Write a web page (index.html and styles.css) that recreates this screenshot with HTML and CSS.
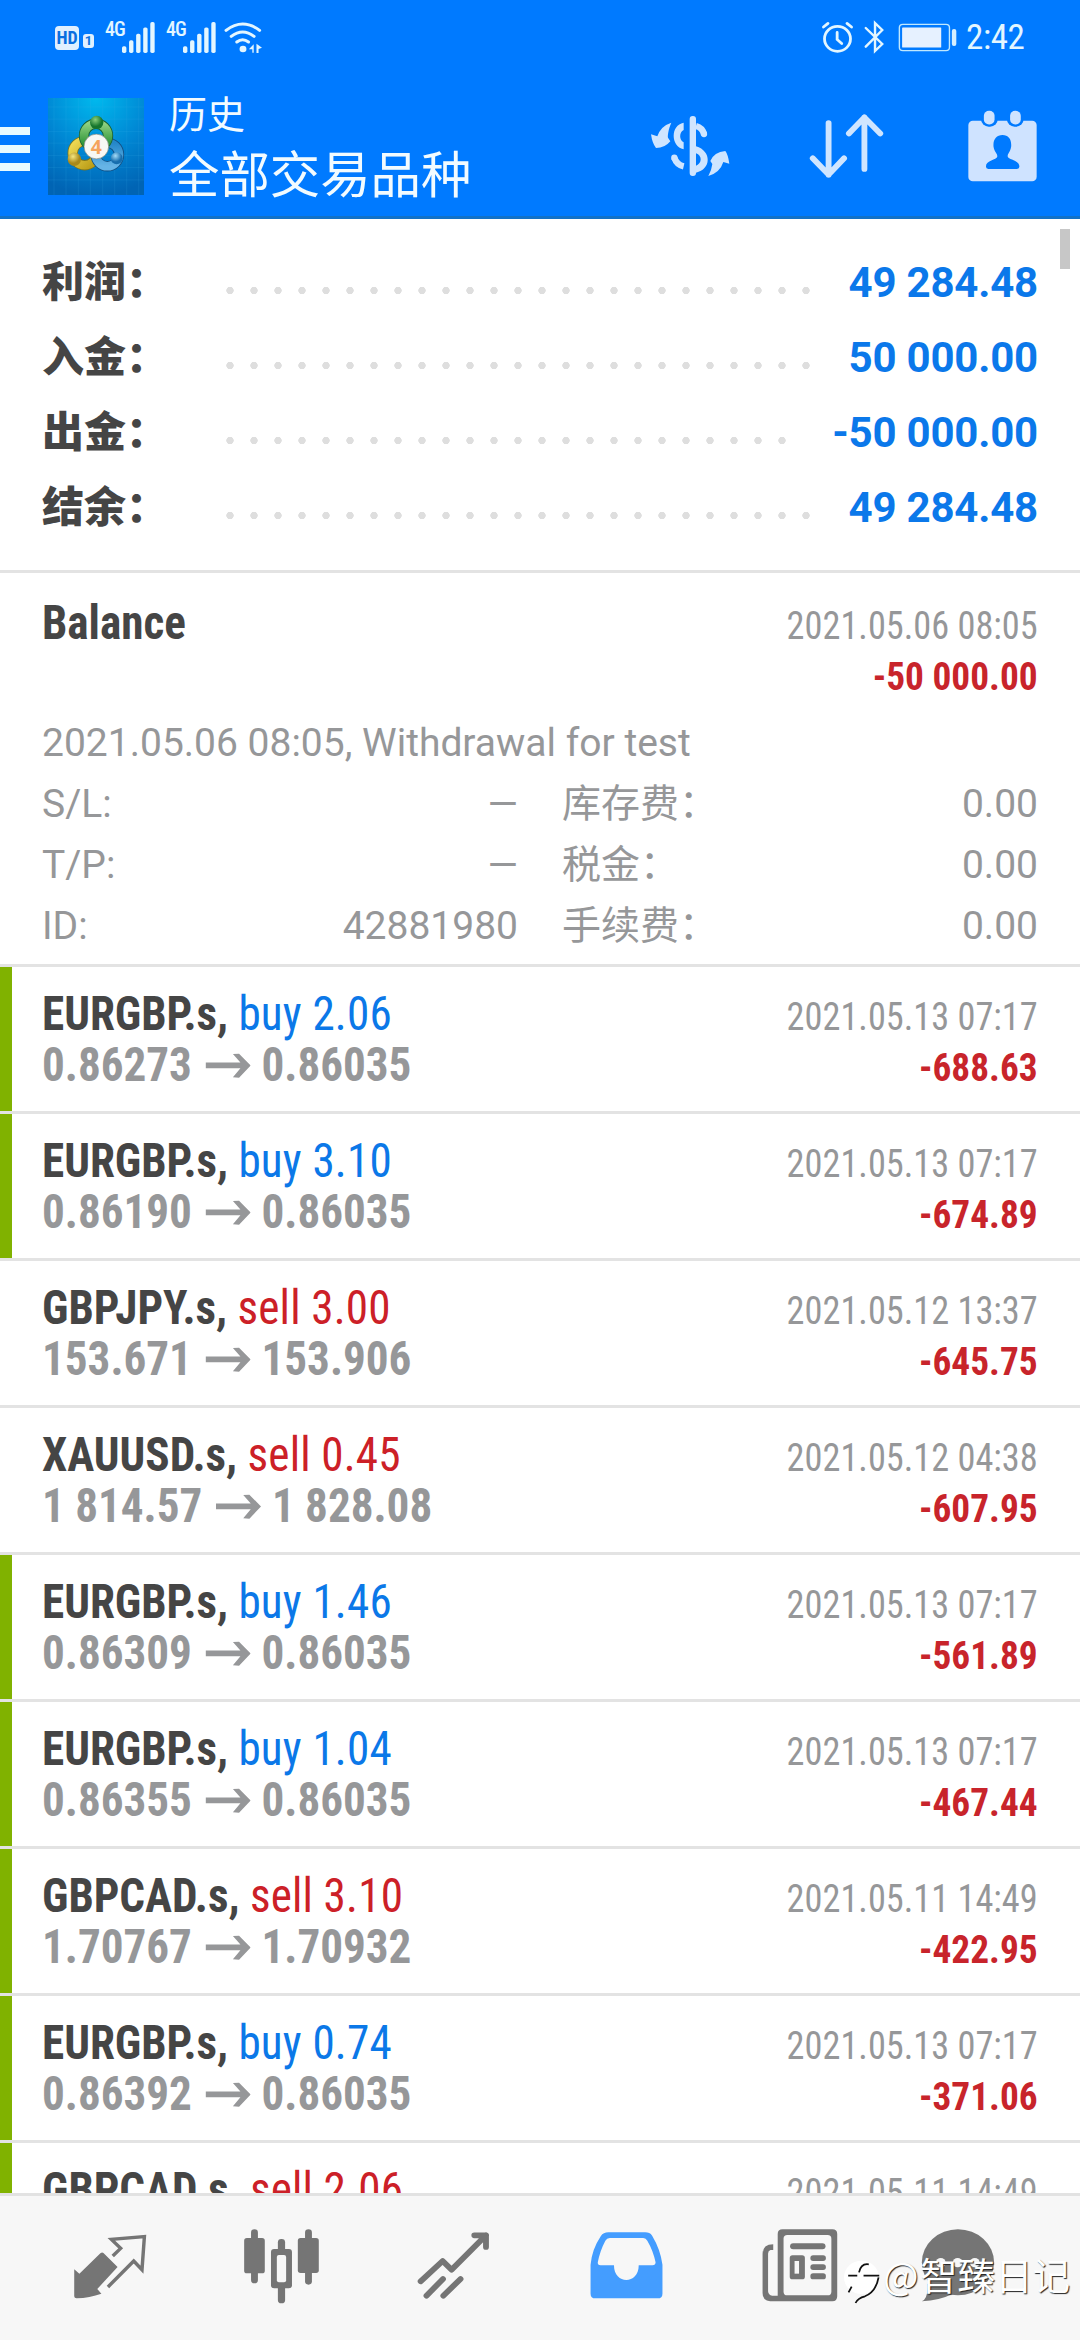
FILE: index.html
```html
<!DOCTYPE html>
<html lang="zh-CN">
<head>
<meta charset="utf-8">
<title>历史</title>
<link rel="stylesheet" href="styles.css">
</head>
<body>
<svg class="defs" width="0" height="0">
  <symbol id="arrow" viewBox="0 0 132 74" preserveAspectRatio="none"><path d="M0 28H102L80 3L98 2L132 37L98 73L80 72L102 45H0Z" fill="#969799"/></symbol>
  <symbol id="bars" viewBox="0 0 98 92" preserveAspectRatio="none"><g fill="#e3f6ff"><rect x="0" y="72" width="13" height="20" rx="5"/><rect x="21" y="54" width="13" height="38" rx="5"/><rect x="42" y="35" width="13" height="57" rx="5"/><rect x="63" y="16" width="13" height="76" rx="5"/><rect x="84" y="0" width="13" height="92" rx="5"/></g></symbol>
</svg>

<header class="top">
  <div class="status">
    <span class="hd">HD</span><span class="sim">1</span>
    <span class="net">4G</span><svg class="signal"><use href="#bars"/></svg>
    <span class="net second">4G</span><svg class="signal"><use href="#bars"/></svg>
    <svg class="wifi" viewBox="650 62 110 96" preserveAspectRatio="none">
      <g fill="none" stroke="#e3f6ff" stroke-width="9" stroke-linecap="round"><path d="M656 90Q704 52 753 90"/><path d="M671 108Q704 82 737 108"/><path d="M687 125Q704 112 721 125"/></g>
      <circle cx="705" cy="146" r="10" fill="#e3f6ff"/><path d="M722 147L736 132V157H732V147ZM744 130L760 142L750 146V158H744Z" fill="#e3f6ff"/>
    </svg>
    <svg class="alarm" viewBox="816 62 94 98" preserveAspectRatio="none">
      <g fill="none" stroke="#e3f6ff" stroke-width="8" stroke-linecap="round"><circle cx="863" cy="115" r="37"/><path d="M862 96V117L875 129"/><path d="M823 80L836 69M903 80L890 69"/></g>
    </svg>
    <svg class="bt" viewBox="936 60 64 102" preserveAspectRatio="none"><path d="M944 84L992 132L971 153V69L992 90L944 140" fill="none" stroke="#e3f6ff" stroke-width="7" stroke-linecap="round"/></svg>
    <svg class="battery" viewBox="1038 70 172 86" preserveAspectRatio="none"><rect x="1042" y="74" width="146" height="78" rx="10" fill="none" stroke="#bfe8ff" stroke-width="4"/><rect x="1050" y="83" width="114" height="60" rx="2" fill="#e6f1ff"/><rect x="1195" y="88" width="13" height="50" rx="6" fill="#d5efff"/></svg>
    <span class="clock">2:42</span>
  </div>
  <div class="appbar">
    <svg class="menu" viewBox="0 0 30 52"><path d="M0 7H30V15H0ZM0 25H30V33H0ZM0 43H30V51H0Z" fill="#e8fbff"/></svg>
    <svg class="logo" viewBox="24 25 288 290" preserveAspectRatio="none">
      <defs>
        <radialGradient id="sky" cx=".5" cy="0" r="1"><stop offset="0" stop-color="#00b9ee"/><stop offset=".55" stop-color="#0086d3"/><stop offset="1" stop-color="#0064b4"/></radialGradient>
        <linearGradient id="green" x2="0" y2="1"><stop stop-color="#8ed07f"/><stop offset="1" stop-color="#1d8a2c"/></linearGradient>
        <linearGradient id="gold" x2="1" y2="1"><stop stop-color="#efdb55"/><stop offset="1" stop-color="#b99a14"/></linearGradient>
        <linearGradient id="azure" x2="0" y2="1"><stop stop-color="#2487c9"/><stop offset="1" stop-color="#66b4e6"/></linearGradient>
        <radialGradient id="gball" cx=".4" cy=".3"><stop stop-color="#8bd07c"/><stop offset="1" stop-color="#16752c"/></radialGradient>
        <radialGradient id="yball" cx=".4" cy=".3"><stop stop-color="#f4e680"/><stop offset="1" stop-color="#a8891a"/></radialGradient>
        <radialGradient id="bball" cx=".4" cy=".3"><stop stop-color="#a5dcf8"/><stop offset="1" stop-color="#176eae"/></radialGradient>
      </defs>
      <rect x="24" y="25" width="288" height="290" fill="url(#sky)"/>
      <path d="M42 25V315M78 25V315M115 25V315M151 25V315M188 25V315M224 25V315M260 25V315M296 25V315M24 52H312M24 88H312M24 125H312M24 160H312M24 197H312M24 233H312M24 270H312" stroke="#3fb4e8" stroke-opacity=".22" stroke-width="2"/>
      <circle cx="134" cy="190" r="36" fill="none" stroke="#7b741d" stroke-width="31"/>
      <circle cx="134" cy="190" r="36" fill="none" stroke="url(#gold)" stroke-width="26"/>
      <circle cx="202" cy="194" r="35" fill="none" stroke="#124f83" stroke-width="31"/>
      <circle cx="202" cy="194" r="35" fill="none" stroke="url(#azure)" stroke-width="26"/>
      <circle cx="168" cy="138" r="36" fill="none" stroke="#195f31" stroke-width="31"/>
      <circle cx="168" cy="138" r="36" fill="none" stroke="url(#green)" stroke-width="26"/>
      <circle cx="170" cy="98" r="20" fill="url(#gball)"/><circle cx="103" cy="208" r="20" fill="url(#yball)"/><circle cx="230" cy="205" r="18" fill="url(#bball)"/>
      <circle cx="169" cy="170" r="37" fill="#f8f8f4" stroke="#76827b" stroke-width="2"/>
      <text x="169" y="192" text-anchor="middle" class="four">4</text>
    </svg>
    <div class="titles"><div class="t1">历史</div><div class="t2">全部交易品种</div></div>
    <svg class="dollar" viewBox="30 42 240 186" preserveAspectRatio="none">
      <g fill="#cfe5ff"><rect x="149" y="45" width="19" height="180" rx="9"/><path d="M131 65C91 72 91 135 131 145V124C117 117 117 94 131 87Z"/><path d="M168 136C216 150 214 206 168 215V194C187 187 187 163 168 157Z"/><path d="M94 65C85 85 83 103 84 110L91 121Q75 141 48 141Q37 128 33 100L52 106Q62 75 94 65Z"/><path d="M205 225Q215 207 217 189L211 180Q222 153 256 150Q264 160 268 188L250 183Q240 215 205 225Z"/></g>
      <path d="M168 75Q187 80 192 99M103 170Q110 191 131 196" fill="none" stroke="#cfe5ff" stroke-width="19"/><circle cx="192" cy="99" r="9.500" fill="#cfe5ff"/><circle cx="103" cy="170" r="9.500" fill="#cfe5ff"/>
    </svg>
    <svg class="sort" viewBox="783 344 212 191" preserveAspectRatio="none"><path d="M837 371V525M791 476L837 525L882 476M941 508V354M896 402L941 354L987 402" fill="none" stroke="#cfe5ff" stroke-width="17" stroke-linecap="round" stroke-linejoin="round"/></svg>
    <svg class="calendar" viewBox="1242 331 200 215" preserveAspectRatio="none"><rect x="1243" y="363" width="198" height="181" rx="13" fill="#cfe3ff"/><rect x="1280" y="326" width="48" height="55" rx="22" fill="#007aff"/><rect x="1355" y="326" width="48" height="55" rx="22" fill="#007aff"/><rect x="1288" y="333" width="31" height="41" rx="15" fill="#cfe3ff"/><rect x="1364" y="333" width="31" height="41" rx="15" fill="#cfe3ff"/><path d="M1342 406C1360 406 1369 420 1367 441C1364 458 1357 460 1357 470C1360 481 1391 480 1391 500Q1391 507 1384 507H1301Q1294 507 1294 500C1294 480 1325 481 1327 470C1327 460 1319 458 1316 441C1314 420 1324 406 1342 406Z" fill="#007aff"/></svg>
  </div>
</header>

<main class="list">
  <div class="thumb"></div>
  <section class="summary">
    <div class="sum"><b>利润：</b><i></i><span>49 284.48</span></div>
    <div class="sum"><b>入金：</b><i></i><span>50 000.00</span></div>
    <div class="sum"><b>出金：</b><i></i><span>-50 000.00</span></div>
    <div class="sum"><b>结余：</b><i></i><span>49 284.48</span></div>
  </section>
  <section class="balance">
    <div class="head"><div class="sym">Balance</div><div class="right"><div class="date">2021.05.06 08:05</div><div class="amt">-50 000.00</div></div></div>
    <div class="note">2021.05.06 08:05, Withdrawal for test</div>
    <div class="grid">
      <div class="kv"><span>S/L:</span><span>—</span></div><div class="kv"><span>库存费：</span><span>0.00</span></div>
      <div class="kv"><span>T/P:</span><span>—</span></div><div class="kv"><span>税金：</span><span>0.00</span></div>
      <div class="kv"><span>ID:</span><span>42881980</span></div><div class="kv"><span>手续费：</span><span>0.00</span></div>
    </div>
  </section>
  <article class="trade green"><div><div class="sym">EURGBP.s, <span class="buy">buy 2.06</span></div><div class="price">0.86273<svg><use href="#arrow"/></svg>0.86035</div></div><div class="right"><div class="date">2021.05.13 07:17</div><div class="amt">-688.63</div></div></article>
  <article class="trade green"><div><div class="sym">EURGBP.s, <span class="buy">buy 3.10</span></div><div class="price">0.86190<svg><use href="#arrow"/></svg>0.86035</div></div><div class="right"><div class="date">2021.05.13 07:17</div><div class="amt">-674.89</div></div></article>
  <article class="trade"><div><div class="sym">GBPJPY.s, <span class="sell">sell 3.00</span></div><div class="price">153.671<svg><use href="#arrow"/></svg>153.906</div></div><div class="right"><div class="date">2021.05.12 13:37</div><div class="amt">-645.75</div></div></article>
  <article class="trade"><div><div class="sym">XAUUSD.s, <span class="sell">sell 0.45</span></div><div class="price">1 814.57<svg><use href="#arrow"/></svg>1 828.08</div></div><div class="right"><div class="date">2021.05.12 04:38</div><div class="amt">-607.95</div></div></article>
  <article class="trade green"><div><div class="sym">EURGBP.s, <span class="buy">buy 1.46</span></div><div class="price">0.86309<svg><use href="#arrow"/></svg>0.86035</div></div><div class="right"><div class="date">2021.05.13 07:17</div><div class="amt">-561.89</div></div></article>
  <article class="trade green"><div><div class="sym">EURGBP.s, <span class="buy">buy 1.04</span></div><div class="price">0.86355<svg><use href="#arrow"/></svg>0.86035</div></div><div class="right"><div class="date">2021.05.13 07:17</div><div class="amt">-467.44</div></div></article>
  <article class="trade green"><div><div class="sym">GBPCAD.s, <span class="sell">sell 3.10</span></div><div class="price">1.70767<svg><use href="#arrow"/></svg>1.70932</div></div><div class="right"><div class="date">2021.05.11 14:49</div><div class="amt">-422.95</div></div></article>
  <article class="trade green"><div><div class="sym">EURGBP.s, <span class="buy">buy 0.74</span></div><div class="price">0.86392<svg><use href="#arrow"/></svg>0.86035</div></div><div class="right"><div class="date">2021.05.13 07:17</div><div class="amt">-371.06</div></div></article>
  <article class="trade green"><div><div class="sym">GBPCAD.s, <span class="sell">sell 2.06</span></div></div><div class="right"><div class="date">2021.05.11 14:49</div></div></article>
</main>

<nav class="tabs">
  <div><svg viewBox="194 380 250 240" preserveAspectRatio="none" fill="#757575"><path d="M300 458L341 500L282 566L294 580Q260 592 222 594Q215 594 215 588V507L230 520L291 459Q296 455 300 458Z"/><path d="M327 467L350 444L323 417L419 409L412 508L388 482L313 560" fill="none" stroke="#757575" stroke-width="10"/></svg></div>
  <div><svg viewBox="694 380 250 240" preserveAspectRatio="none" fill="#757575"><rect x="729" y="387" width="20" height="162" rx="10"/><rect x="709" y="413" width="60" height="106" rx="8"/><rect x="807" y="416" width="21" height="193" rx="10"/><rect x="787" y="446" width="61" height="118" rx="9"/><rect x="804" y="464" width="27" height="82" rx="6" fill="#f7f7f7"/><rect x="886" y="387" width="20" height="166" rx="10"/><rect x="865" y="413" width="61" height="105" rx="8"/></svg></div>
  <div><svg viewBox="1193 380 250 240" preserveAspectRatio="none"><path d="M1221 543L1285 482L1311 508L1411 405M1377 405H1411V440M1238 586L1286 536M1287 586L1337 536" fill="none" stroke="#757575" stroke-width="17" stroke-linecap="round" stroke-linejoin="round"/></svg></div>
  <div><svg viewBox="125 380 250 240" preserveAspectRatio="none"><path d="M199 396H306Q319 396 326 406Q350 447 356 493V580Q356 594 342 594H161Q147 594 147 580V493Q151 447 177 407Q184 396 199 396Z" fill="#449dff"/><path d="M203 413H300Q308 413 312 421Q329 451 336 486Q336 495 327 495H287C287 554 215 554 215 495H176Q167 495 168 486Q174 452 190 421Q194 413 203 413Z" fill="#f7f7f7"/></svg></div>
  <div><svg viewBox="624 380 250 240" preserveAspectRatio="none" fill="#757575"><path d="M704 387H849Q863 387 863 401V588Q863 603 849 603H668Q646 601 646 578V460Q647 432 677 432V449H669Q662 451 662 460V573Q663 585 674 586H690V401Q690 387 704 387Z"/><rect x="707" y="404" width="139" height="181" rx="11" fill="#f7f7f7"/><rect x="726" y="429" width="103" height="18" rx="9"/><rect x="725" y="465" width="44" height="72" rx="8"/><rect x="739" y="482" width="13" height="38" fill="#f7f7f7"/><rect x="785" y="465" width="45" height="17" rx="8"/><rect x="785" y="492" width="45" height="17" rx="8"/><rect x="785" y="519" width="45" height="18" rx="8"/></svg></div>
  <div><svg viewBox="1124 380 250 240" preserveAspectRatio="none" fill="#757575"><ellipse cx="1214" cy="486" rx="105" ry="99"/><path d="M1109 603Q1128 594 1125 550L1200 580Q1160 600 1109 603Z"/><g fill="#f7f7f7"><circle cx="1164" cy="487" r="14"/><circle cx="1213" cy="487" r="14"/><circle cx="1263" cy="487" r="14"/></g></svg></div>
</nav>
<div class="mark">
  <svg viewBox="884 480 106 132" preserveAspectRatio="none"><circle cx="934" cy="532" r="50" fill="#fff"/><path d="M917 609Q924 594 944 589Q976 575 983 532M896 527H922M940 527H985M955 493Q933 489 927 517M906 560L897 577" fill="none" stroke="#111" stroke-width="5"/></svg><span class="at">@</span><span>智臻日记</span>
</div>
</body>
</html>
```
FILE: styles.css
```css
* { box-sizing: border-box; }
body {
  margin: 0; width: 1080px; height: 2340px; overflow: hidden;
  display: flex; flex-direction: column; position: relative;
  background: #fff; color: #454545;
  font-family: Roboto, "Noto Sans CJK SC", sans-serif;
}
svg { display: block; flex: none; overflow: visible; }
.defs { position: absolute; }

.top { height: 219px; background: #007aff; border-bottom: 3px solid #1272c8; flex: none; }
.status { height: 76px; display: flex; align-items: flex-start; padding-left: 55px; color: #e3f6ff; }
.hd { width: 24px; height: 24px; margin-top: 26px; border-radius: 4px; background: #e0f0ff; color: #0a6fe0; font: 700 18px/24px "Roboto Condensed", Roboto; text-align: center; }
.sim { width: 11px; height: 14px; margin: 34px 11px 0 4px; border-radius: 3px; background: #e0f0ff; color: #0a6fe0; font: 700 13px/14px Roboto; text-align: center; }
.net { width: 17px; font: 500 20px/20px "Roboto Condensed", Roboto; margin-top: 19px; letter-spacing: -1px; }
.net.second { margin-left: 11px; }
.signal { width: 33px; height: 31px; margin-top: 22px; }
.wifi { width: 38px; height: 32px; margin: 21px 0 0 8px; }
.alarm { width: 33px; height: 33px; margin: 21px 0 0 559px; }
.bt { width: 22px; height: 34px; margin: 20px 0 0 9px; }
.battery { width: 59px; height: 29px; margin: 23px 0 0 13px; }
.clock { font: 400 35px/40px "Roboto Condensed", Roboto; margin: 18px 0 0 9px; letter-spacing: -.4px; }

.appbar { height: 140px; display: flex; align-items: center; }
.menu { width: 30px; height: 52px; }
.logo { width: 96px; height: 97px; margin-left: 18px; }
.four { font: 700 58px "Open Sans", sans-serif; fill: #f5a45c; }
.titles { width: 481px; margin-left: 25px; padding-bottom: 6px; color: #f2fbff; font-family: "Noto Sans CJK SC", sans-serif; }
.t1 { font-size: 38px; line-height: 58px; }
.t2 { font-size: 50.400px; line-height: 62px; }
.dollar { width: 80px; height: 62px; }
.sort { width: 73px; height: 64px; margin-left: 80px; }
.calendar { width: 69px; height: 72px; margin-left: 85px; }

.list { flex: 1; min-height: 0; overflow: hidden; position: relative; }
.thumb { position: absolute; right: 10px; top: 10px; width: 10px; height: 40px; background: #c7c7c7; }
.summary, .balance, .trade { border-bottom: 3px solid #e3e3e3; }
.summary { height: 354px; padding: 26px 42px 0 42px; }
.sum { display: flex; height: 75px; line-height: 75px; font-size: 42px; font-weight: 700; }
.sum b { width: 176px; }
.sum i { flex: 1; margin-right: 31px; background: radial-gradient(circle 4px at 12px 45.500px, #dedede 3.400px, transparent 4px) 0 0 / 24px 75px repeat-x; }
.sum span { color: #0b78ea; letter-spacing: -.2px; }

.balance { height: 394px; padding: 24px 42px 0 42px; color: #969799; font-size: 39px; line-height: 61px; }
.head { display: flex; justify-content: space-between; height: 116px; }
.grid { display: grid; grid-template-columns: 476px 476px; column-gap: 44px; }
.kv { display: flex; justify-content: space-between; height: 61px; }

.sym, .price { font: 700 48px/51px "Roboto Condensed", Roboto; color: #454545; white-space: pre; transform: scaleX(.94); transform-origin: left; }
.right { font: 400 39px/51px "Roboto Condensed", Roboto; color: #969799; text-align: right; padding-top: 4px; }
.date { transform: scaleX(.931); transform-origin: right; }
.amt { font-weight: 700; color: #c8242b; transform: scaleX(.957); transform-origin: right; }
.buy, .sell { font-weight: 400; letter-spacing: .2px; }
.buy { color: #0b78e8; }
.sell { color: #cc2027; }
.price { color: #969799; display: flex; }
.price svg { width: 48px; height: 25px; margin: 14px 12px 0 14px; }
.trade { height: 147px; padding: 21px 42px 0 42px; display: flex; justify-content: space-between; }
.green { box-shadow: inset 12px 0 #80b200; }

.tabs { height: 147px; flex: none; background: #f7f7f7; border-top: 3px solid #e2e2e2; padding: 31px 24px 0; display: grid; grid-template-columns: repeat(6, 172px); justify-items: center; align-items: start; }
.tabs svg { width: 86px; height: 80px; }

.mark { position: absolute; left: 844px; top: 2249px; display: flex; color: #fff; font: 400 37.500px/50px "Noto Sans CJK SC", sans-serif; text-shadow: 1px 1px 1px #222; white-space: nowrap; }
.mark svg { width: 37px; height: 44px; margin: 11px 2px 0 0; }
.at { width: 37px; }
```
